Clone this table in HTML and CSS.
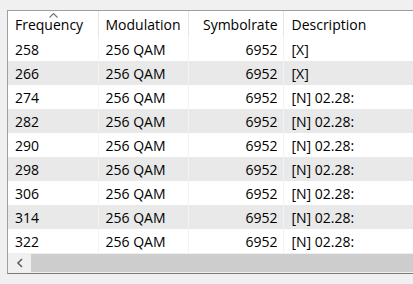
FILE: index.html
```html
<!DOCTYPE html>
<html lang="en">
<head>
    <meta charset="UTF-8">
    <title>Transponder List</title>
    <link rel="stylesheet" href="styles.css">
</head>
<body>
    <div class="list-frame">
        <table class="list">
            <thead>
                <tr>
                    <th class="col-freq">
                        <svg class="sort-arrow" width="9" height="5" viewBox="0 0 9 5"><path d="M0.5 4.5 L4.5 0.5 L8.5 4.5" fill="none" stroke="#707070" stroke-width="1.1"/></svg>
                        Frequency
                    </th>
                    <th class="col-mod">Modulation</th>
                    <th class="col-rate num">Symbolrate</th>
                    <th class="col-desc">Description</th>
                </tr>
            </thead>
            <tbody id="channelList">
                <!-- rows are filled in by the script below -->
            </tbody>
        </table>
        <div class="hscroll">
            <div class="hscroll-btn">
                <svg width="8" height="10" viewBox="0 0 8 10"><path d="M6 1 L2 5 L6 9" fill="none" stroke="#606060" stroke-width="1.6"/></svg>
            </div>
            <div class="hscroll-thumb"></div>
        </div>
    </div>

    <script>
        const channels = [
            { freq: 258, mod: "256 QAM", rate: 6952, desc: "[X]" },
            { freq: 266, mod: "256 QAM", rate: 6952, desc: "[X]" },
            { freq: 274, mod: "256 QAM", rate: 6952, desc: "[N] 02.28:" },
            { freq: 282, mod: "256 QAM", rate: 6952, desc: "[N] 02.28:" },
            { freq: 290, mod: "256 QAM", rate: 6952, desc: "[N] 02.28:" },
            { freq: 298, mod: "256 QAM", rate: 6952, desc: "[N] 02.28:" },
            { freq: 306, mod: "256 QAM", rate: 6952, desc: "[N] 02.28:" },
            { freq: 314, mod: "256 QAM", rate: 6952, desc: "[N] 02.28:" },
            { freq: 322, mod: "256 QAM", rate: 6952, desc: "[N] 02.28:" }
        ];

        const list = document.getElementById("channelList");
        channels.forEach((ch) => {
            const row = document.createElement("tr");
            row.innerHTML = `<td>${ch.freq}</td>
                             <td>${ch.mod}</td>
                             <td class="num">${ch.rate}</td>
                             <td>${ch.desc}</td>`;
            list.appendChild(row);
        });
    </script>
</body>
</html>
```

FILE: styles.css
```css
body {
    margin: 0;
    padding: 0;
    background-color: #f0f0f0;
    font-family: "Open Sans", "Noto Sans", sans-serif;
    font-size: 14px;
    color: #000;
    overflow: hidden;
}
.list-frame {
    margin: 10px 0 0 7px;
    width: 440px;
    background-color: #fff;
    border: 1px solid #a0a0a0;
    border-right: none;
    border-bottom-color: #7a7a7a;
}
.list {
    border-collapse: collapse;
    table-layout: fixed;
    width: 440px;
}
.list th,
.list td {
    box-sizing: border-box;
    white-space: nowrap;
}
.col-freq { width: 90px; }
.col-mod { width: 90px; }
.col-rate { width: 95px; }
.list th {
    position: relative;
    height: 26px;
    padding: 1px 6px 0 7px;
    font-weight: normal;
    text-align: left;
    border-right: 1px solid #e5e5e5;
}
.list td {
    height: 24px;
    padding: 0 6px 0 7px;
    border-right: 1px solid #f3f3f3;
}
.list th.col-desc,
.list td:last-child {
    padding-left: 8px;
}
.list .num {
    text-align: right;
    padding-right: 5px;
}
.list tbody tr:nth-child(even) td {
    background-color: #e9e9e9;
}
.sort-arrow {
    position: absolute;
    left: 41px;
    top: 2px;
    display: block;
}
.hscroll {
    display: flex;
    height: 20px;
    background-color: #f0f0f0;
}
.hscroll-btn {
    width: 23px;
    display: flex;
    align-items: center;
    justify-content: center;
}
.hscroll-thumb {
    flex: 1;
    margin: 1px 0;
    background-color: #cdcdcd;
}
```
